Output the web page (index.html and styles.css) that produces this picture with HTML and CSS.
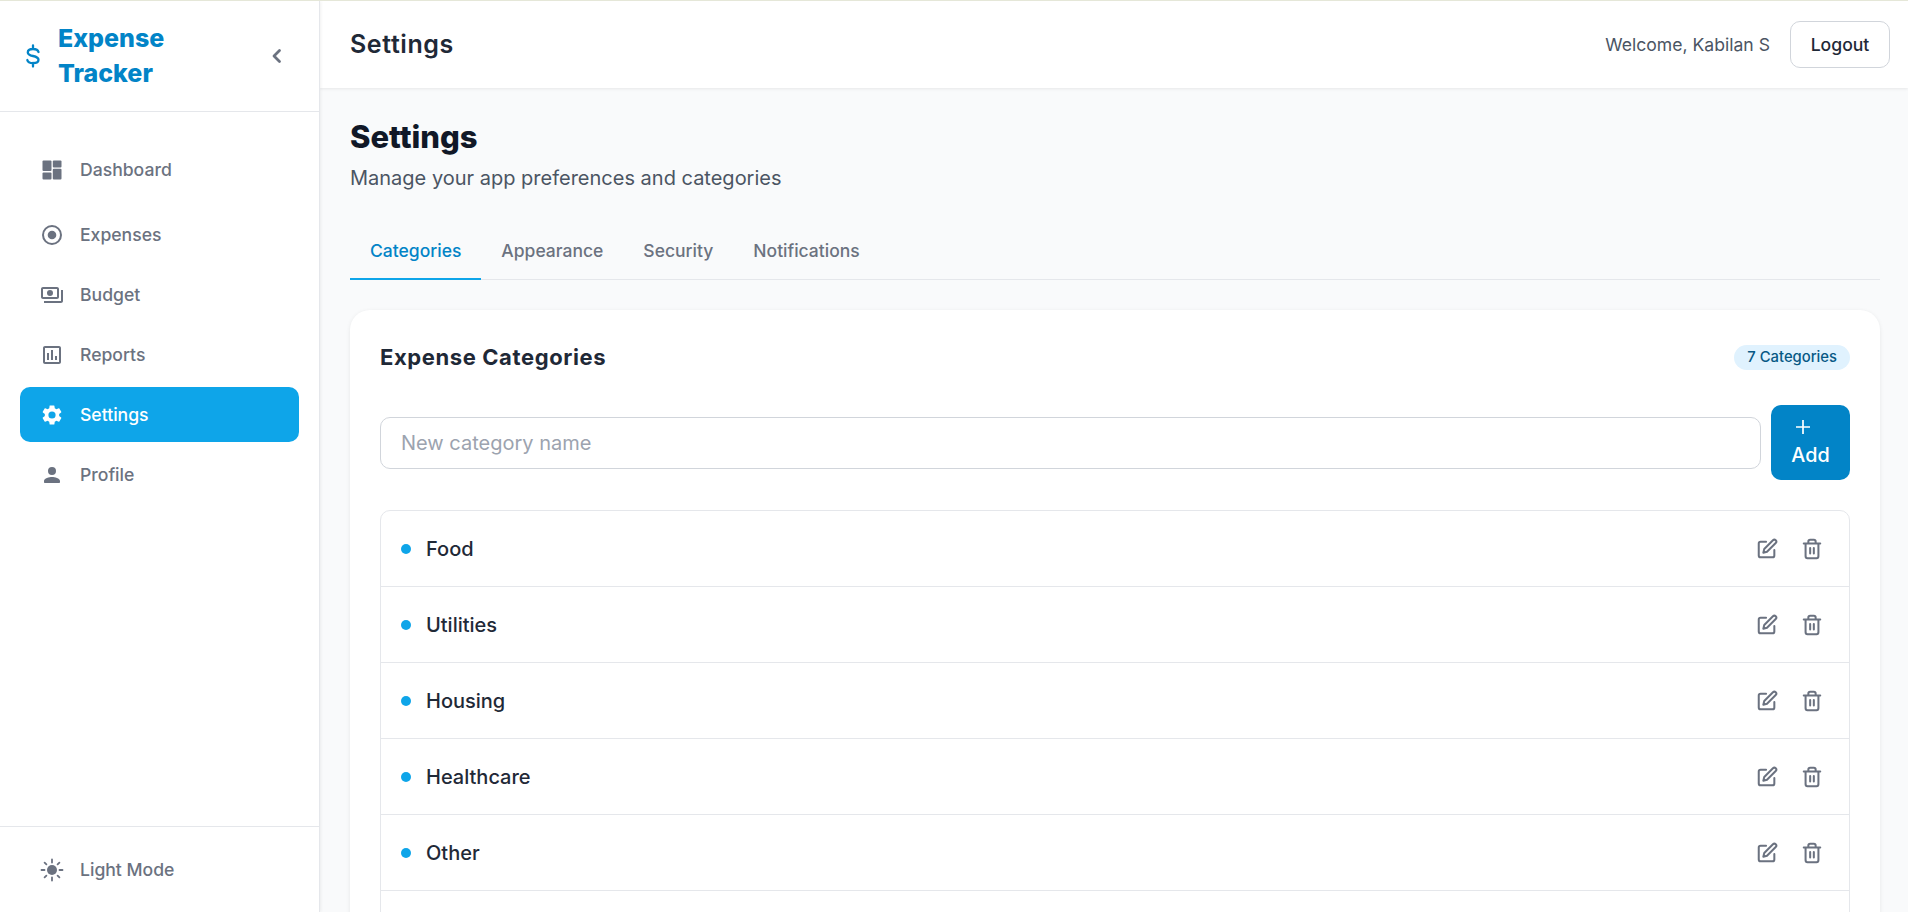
FILE: index.html
```html
<!DOCTYPE html>
<html lang="en">
<head>
  <meta charset="UTF-8" />
  <title>Expense Tracker - Settings</title>
  <link rel="stylesheet" href="styles.css">
</head>
<body>
  <div class="app">
    <aside class="sidebar">
      <div class="brand">
        <svg class="brand-icon" viewBox="0 0 24 24"><path d="M17.500 8C17 6 15 5 12 5 8.800 5 6.800 6.400 6.800 8.500c0 2.200 2.200 2.900 5.200 3.500 3.200.7 5.500 1.500 5.500 3.800 0 2.100-2.300 3.400-5.500 3.400-3 0-5.200-1.100-5.700-3.200M12 1.500V5M12 19v3.500" fill="none" stroke="currentColor" stroke-width="2.300" stroke-linecap="round"/></svg>
        <span class="brand-name">Expense Tracker</span>
        <svg class="collapse" viewBox="0 0 24 24"><path d="M14.500 6.500 9 12l5.500 5.500" fill="none" stroke="currentColor" stroke-width="2.800" stroke-linecap="round" stroke-linejoin="round"/></svg>
      </div>
      <nav class="nav">
        <a class="nav-item first">
          <svg viewBox="0 0 24 24"><rect x="2.500" y="2.500" width="9" height="10.500" rx="1"/><rect x="2.500" y="14.500" width="9" height="7" rx="1"/><rect x="12.800" y="2.500" width="8.700" height="7" rx="1"/><rect x="12.800" y="10.700" width="8.700" height="10.800" rx="1"/></svg>
          Dashboard
        </a>
        <a class="nav-item second">
          <svg viewBox="0 0 24 24"><path d="M12 2a10 10 0 1 0 0 20 10 10 0 0 0 0-20zm0 18a8 8 0 1 1 0-16 8 8 0 0 1 0 16z"/><circle cx="12" cy="12" r="4.300"/></svg>
          Expenses
        </a>
        <a class="nav-item">
          <svg viewBox="0 0 24 24"><path d="M19 14V6c0-1.100-.9-2-2-2H3c-1.100 0-2 .9-2 2v8c0 1.100.9 2 2 2h14c1.100 0 2-.9 2-2zm-2 0H3V6h14v8zm-7-7a3 3 0 1 0 0 6 3 3 0 0 0 0-6zm13 0v11c0 1.100-.9 2-2 2H4v-2h17V7h2z"/></svg>
          Budget
        </a>
        <a class="nav-item">
          <svg viewBox="0 0 24 24"><path d="M19 3H5c-1.100 0-2 .9-2 2v14c0 1.100.9 2 2 2h14c1.100 0 2-.9 2-2V5c0-1.100-.9-2-2-2zm0 16H5V5h14v14zM7 10h2v7H7v-7zm4-3h2v10h-2V7zm4 6h2v4h-2v-4z"/></svg>
          Reports
        </a>
        <a class="nav-item active">
          <svg viewBox="0 0 24 24"><path d="M19.140 12.940c.04-.3.060-.61.060-.94 0-.32-.02-.64-.07-.94l2.030-1.580a.49.49 0 0 0 .12-.61l-1.920-3.320a.488.488 0 0 0-.59-.22l-2.390.96c-.5-.38-1.030-.7-1.620-.94l-.36-2.540a.484.484 0 0 0-.48-.41h-3.840c-.24 0-.43.170-.47.410l-.36 2.540c-.59.240-1.130.570-1.620.94l-2.390-.96c-.22-.08-.47 0-.59.220L2.740 8.870c-.12.210-.08.470.120.610l2.030 1.580c-.05.300-.09.630-.09.940s.02.640.07.940l-2.030 1.580a.49.49 0 0 0-.12.61l1.920 3.320c.12.220.37.290.59.220l2.390-.96c.5.380 1.030.7 1.620.94l.36 2.540c.05.240.24.410.48.410h3.840c.24 0 .44-.17.470-.41l.36-2.540c.59-.24 1.130-.56 1.620-.94l2.390.96c.22.080.47 0 .59-.22l1.920-3.320c.12-.22.070-.47-.12-.61l-2.010-1.580zM12 15.600A3.600 3.600 0 1 1 12 8.400a3.600 3.600 0 0 1 0 7.200z"/></svg>
          Settings
        </a>
        <a class="nav-item">
          <svg viewBox="0 0 24 24"><path d="M12 12a4 4 0 1 0 0-8 4 4 0 0 0 0 8zm0 2c-2.700 0-8 1.300-8 4v1c0 .6.400 1 1 1h14c.6 0 1-.4 1-1v-1c0-2.700-5.300-4-8-4z"/></svg>
          Profile
        </a>
      </nav>
      <div class="sidebar-foot">
        <a class="nav-item">
          <svg viewBox="0 0 24 24"><circle cx="12" cy="12" r="5"/><path d="M12 1.500v3M12 19.500v3M1.500 12h3M19.500 12h3M4.600 4.600l1.800 1.800M17.600 17.600l1.800 1.800M4.600 19.400l1.800-1.800M17.600 6.400l1.800-1.800" fill="none" stroke="currentColor" stroke-width="1.800" stroke-linecap="round"/></svg>
          Light Mode
        </a>
      </div>
    </aside>

    <div class="main">
      <header class="topbar">
        <h2>Settings</h2>
        <div class="user">
          <span>Welcome, Kabilan S</span>
          <button class="logout">Logout</button>
        </div>
      </header>

      <div class="content">
        <h1>Settings</h1>
        <p class="subtitle">Manage your app preferences and categories</p>

        <div class="tabs">
          <a class="tab active">Categories</a>
          <a class="tab">Appearance</a>
          <a class="tab">Security</a>
          <a class="tab">Notifications</a>
        </div>

        <section class="card">
          <div class="card-head">
            <h3>Expense Categories</h3>
            <span class="badge">7 Categories</span>
          </div>
          <div class="add-row">
            <input type="text" placeholder="New category name" />
            <button class="add">
              <svg class="plus" viewBox="0 0 16 16"><path d="M8 1v14M1 8h14" fill="none" stroke="currentColor" stroke-width="1.700"/></svg>
              Add
            </button>
          </div>
          <ul class="list">
            <li><i class="dot"></i><span class="name">Food</span>
              <svg class="act" viewBox="0 0 24 24"><use href="#edit"/></svg><svg class="act" viewBox="0 0 24 24"><use href="#trash"/></svg></li>
            <li><i class="dot"></i><span class="name">Utilities</span>
              <svg class="act" viewBox="0 0 24 24"><use href="#edit"/></svg><svg class="act" viewBox="0 0 24 24"><use href="#trash"/></svg></li>
            <li><i class="dot"></i><span class="name">Housing</span>
              <svg class="act" viewBox="0 0 24 24"><use href="#edit"/></svg><svg class="act" viewBox="0 0 24 24"><use href="#trash"/></svg></li>
            <li><i class="dot"></i><span class="name">Healthcare</span>
              <svg class="act" viewBox="0 0 24 24"><use href="#edit"/></svg><svg class="act" viewBox="0 0 24 24"><use href="#trash"/></svg></li>
            <li><i class="dot"></i><span class="name">Other</span>
              <svg class="act" viewBox="0 0 24 24"><use href="#edit"/></svg><svg class="act" viewBox="0 0 24 24"><use href="#trash"/></svg></li>
            <li></li>
          </ul>
        </section>
      </div>
    </div>
  </div>

  <svg class="defs" width="0" height="0">
    <symbol id="edit" viewBox="0 0 24 24">
      <path d="M11 4H5a2 2 0 0 0-2 2v13a2 2 0 0 0 2 2h13a2 2 0 0 0 2-2v-6" fill="none" stroke="currentColor" stroke-width="2.200" stroke-linecap="round" stroke-linejoin="round"/>
      <path d="M18.500 2.500a2.100 2.100 0 0 1 3 3L12 15l-4 1 1-4 9.500-9.500z" fill="none" stroke="currentColor" stroke-width="2.200" stroke-linecap="round" stroke-linejoin="round"/>
    </symbol>
    <symbol id="trash" viewBox="0 0 24 24">
      <path d="M3 6h18M8 6V4a2 2 0 0 1 2-2h4a2 2 0 0 1 2 2v2M19 6v14a2 2 0 0 1-2 2H7a2 2 0 0 1-2-2V6M10 11v6M14 11v6" fill="none" stroke="currentColor" stroke-width="2.200" stroke-linecap="round" stroke-linejoin="round"/>
    </symbol>
  </svg>
</body>
</html>
```

FILE: styles.css
```css
* {
  box-sizing: border-box;
}

html, body {
  height: 100%;
  margin: 0;
}

body {
  font-family: Inter, "Liberation Sans", sans-serif;
  background: #f9fafb;
  color: #111827;
  overflow: hidden;
  border-top: 1px solid #e5e7d8;
}

.defs {
  position: absolute;
}

.app {
  display: flex;
  height: 911px;
}

/* sidebar */
.sidebar {
  width: 320px;
  flex: none;
  display: flex;
  flex-direction: column;
  background: #fff;
  border-right: 1px solid #e5e7eb;
  box-shadow: 1px 0 3px rgba(0, 0, 0, 0.06);
  z-index: 2;
}

.brand {
  height: 111px;
  display: flex;
  align-items: center;
  padding: 0 30px 0 24px;
  border-bottom: 1px solid #e5e7eb;
  color: #0284c7;
}

.brand-icon {
  width: 24px;
  height: 24px;
  flex: none;
  margin: 0 13px 0 -3px;
}

.brand-name {
  width: 150px;
  font-size: 25px;
  line-height: 35px;
  font-weight: 800;
}

.collapse {
  width: 24px;
  height: 24px;
  margin-left: auto;
  color: #6b7280;
}

.nav {
  flex: 1;
  padding: 30px 20px 0;
  display: flex;
  flex-direction: column;
  gap: 5px;
}

.nav-item {
  height: 55px;
  display: flex;
  align-items: center;
  gap: 16px;
  padding: 0 20px;
  border-radius: 10px;
  font-size: 17.6px;
  font-weight: 500;
  color: #6b7280;
}

.nav-item svg {
  width: 24px;
  height: 24px;
  fill: currentColor;
  flex: none;
}

.nav-item.second {
  margin-top: 5px;
}

.nav-item.active {
  background: #0ea5e9;
  color: #fff;
}

.sidebar-foot {
  height: 86px;
  padding: 15px 20px;
  border-top: 1px solid #e5e7eb;
}

/* main column */
.main {
  flex: 1;
  min-width: 0;
  display: flex;
  flex-direction: column;
}

.topbar {
  height: 87px;
  flex: none;
  display: flex;
  align-items: center;
  justify-content: space-between;
  padding: 0 18px 0 30px;
  background: #fff;
  box-shadow: 0 1px 3px rgba(0, 0, 0, 0.08);
  z-index: 1;
}

.topbar h2 {
  margin: 0 0 2px;
  font-size: 25px;
  letter-spacing: 0.6px;
  font-weight: 600;
  color: #1f2937;
}

.user {
  display: flex;
  align-items: center;
  gap: 20px;
  font-size: 17.6px;
  color: #4b5563;
}

.logout {
  width: 100px;
  height: 47px;
  background: #fff;
  border: 1px solid #d1d5db;
  border-radius: 10px;
  font: 500 17.6px Inter, sans-serif;
  color: #1f2937;
}

.content {
  flex: 1;
  padding: 30px 28px 0 30px;
}

h1 {
  margin: 0;
  font-size: 31px;
  line-height: 38px;
  font-weight: 800;
}

.subtitle {
  margin: 8px 0 0;
  font-size: 20px;
  line-height: 28px;
  color: #4b5563;
}

.tabs {
  display: flex;
  margin-top: 30px;
  border-bottom: 1px solid #e5e7eb;
}

.tab {
  height: 58px;
  padding: 0 20px;
  display: flex;
  align-items: center;
  font-size: 17.5px;
  font-weight: 500;
  color: #6b7280;
  border-bottom: 2px solid transparent;
  margin-bottom: -1px;
}

.tab.active {
  color: #0284c7;
  border-bottom-color: #0ea5e9;
}

.card {
  margin-top: 30px;
  background: #fff;
  border-radius: 20px;
  padding: 30px;
  box-shadow: 0 1px 4px rgba(0, 0, 0, 0.08);
  height: 800px;
}

.card-head {
  display: flex;
  align-items: center;
  justify-content: space-between;
  height: 34px;
}

.card-head h3 {
  margin: 0;
  font-size: 22px;
  letter-spacing: 0.6px;
  font-weight: 700;
  color: #1f2937;
}

.badge {
  height: 25px;
  padding: 0 13px;
  display: flex;
  align-items: center;
  border-radius: 13px;
  background: #e0f2fe;
  color: #075985;
  font-size: 14.8px;
  font-weight: 500;
}

.add-row {
  display: flex;
  align-items: center;
  gap: 10px;
  margin-top: 31px;
}

.add-row input {
  flex: 1;
  height: 52px;
  padding: 0 20px;
  border: 1px solid #d1d5db;
  border-radius: 10px;
  font: 400 20px Inter, sans-serif;
  outline: none;
}

.add-row input::placeholder {
  color: #9ca3af;
}

.add {
  width: 79px;
  height: 75px;
  padding: 0;
  display: flex;
  flex-direction: column;
  align-items: center;
  gap: 8px;
  justify-content: center;
  border: none;
  border-radius: 10px;
  background: #0284c7;
  color: #fff;
  font: 500 19.8px/24px Inter, sans-serif;
}

.plus {
  width: 16px;
  height: 16px;
  margin-left: -15px;
}

.list {
  list-style: none;
  margin: 30px 0 0;
  padding: 0;
  border: 1px solid #e5e7eb;
  border-radius: 10px;
}

.list li {
  height: 76px;
  display: flex;
  align-items: center;
  padding: 0 26px 0 20px;
  border-bottom: 1px solid #e5e7eb;
}

.dot {
  width: 10px;
  height: 10px;
  border-radius: 50%;
  background: #0ea5e9;
  margin-right: 15px;
}

.name {
  flex: 1;
  font-size: 20px;
  font-weight: 500;
  color: #1f2937;
}

.act {
  width: 22px;
  height: 22px;
  margin-left: 23px;
  color: #6b7280;
}
```
